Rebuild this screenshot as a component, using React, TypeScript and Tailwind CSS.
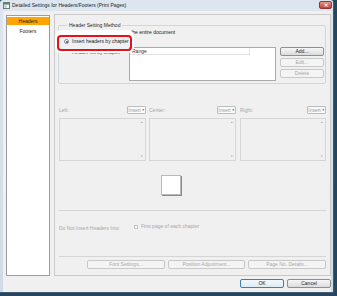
const btn =
  "flex items-center justify-center rounded-[2px] border text-[5px] leading-none";

function Btn({ label, w, disabled, primary }: { label: string; w: string; disabled?: boolean; primary?: boolean }) {
  const look = disabled
    ? "border-[#c8c8c8] bg-[#f4f4f4] text-[#a8a8a8]"
    : primary
      ? "border-[#3c7fb1] bg-gradient-to-b from-[#f2f8fc] to-[#dcebf5] text-[#1e1e1e]"
      : "border-[#8e8f8f] bg-gradient-to-b from-[#f6f6f6] to-[#dcdcdc] text-[#1e1e1e]";
  return <div className={`${btn} ${look} ${w} h-[9px]`}>{label}</div>;
}

function InsertBtn() {
  return (
    <div className="flex h-[8px] w-[19px] items-center justify-center rounded-[1px] border border-[#bdbdbd] bg-[#fafafa] text-[5px] leading-none text-[#9a9a9a]">
      Insert<span className="ml-[1px] text-[3px] text-[#555]">▼</span>
    </div>
  );
}

function PartBox({ label, w }: { label: string; w: string }) {
  return (
    <div className={`flex flex-col ${w}`}>
      <div className="flex h-[8px] items-center justify-between">
        <span className="pt-[1px] text-[#a6a6a6]">{label}</span>
        <InsertBtn />
      </div>
      <div className="mt-[4px] flex h-[43px] flex-col items-end justify-between border border-[#d6d6d6] bg-[#f0f0f0] px-[2px] py-[2px] text-[3px] leading-none text-[#8d8d8d]">
        <span>▴</span>
        <span>▾</span>
      </div>
    </div>
  );
}

export default function App() {
  return (
    <div className="h-[296px] w-[337px] overflow-hidden bg-[#22475e] font-['Liberation_Sans',sans-serif] text-[5px] leading-none text-[#222]">
      <div className="flex h-[293px] w-[334px] flex-col rounded-t-[3px] border-r border-b border-[#40596e] bg-gradient-to-b from-[#dde6ef] to-[#cfdbe6]">
        {/* title bar */}
        <div className="flex h-[11px] items-center pl-[3px] pr-[1px]">
          <svg width="7" height="7" viewBox="0 0 7 7" className="shrink-0">
            <rect x="0.5" y="0.5" width="6" height="6" fill="#f4f6f7" stroke="#6b7b86" />
            <rect x="1" y="1" width="5" height="1.6" fill="#3e9a4a" />
            <rect x="1.5" y="3.5" width="2" height="2" fill="#9fb0bc" />
          </svg>
          <span className="ml-[2px] text-[#1c1c1c]">Detailed Settings for Headers/Footers (Print Pages)</span>
          <div className="ml-auto mt-[-1px] flex h-[8px] w-[13px] items-center justify-center rounded-[2px] border border-[#8c3a33] bg-gradient-to-b from-[#e7968c] to-[#c53f30] text-[5px] font-bold text-white">
            ✕
          </div>
        </div>

        {/* body */}
        <div className="relative ml-[3px] mr-[2px] flex-1 bg-[#f0f0f0]">
          <div className="flex pt-[3px]">
            {/* left list */}
            <div className="ml-[3px] mt-[1px] h-[261px] w-[44px] border border-[#9d9d9d] bg-white">
              <div className="mt-[1px] flex h-[8px] items-center justify-center bg-[#ffa400] text-[#1e1e1e]">Headers</div>
              <div className="mt-[4px] text-center text-[#1e1e1e]">Footers</div>
            </div>

            {/* main panel */}
            <div className="ml-[4px] flex h-[262px] w-[277px] flex-col border border-[#c9c9c9] px-[4px]">
              <fieldset className="-ml-[1px] mt-[8px] h-[61px] w-[267px] rounded-[2px] border border-[#d0d7dc] pr-[1px] pl-[5px]">
                <legend className="ml-[3px] px-[2px] text-[#2a2a2a]">Header Setting Method</legend>
                <div className="mt-[2px] flex items-center">
                  <span className="h-[5px] w-[5px] rounded-full border border-[#8e8e8e] bg-white" />
                  <span className="ml-[3px] text-[#222]">Use the same headers for the entire document</span>
                </div>
                <div className="mt-[4px] flex items-center">
                  <span className="flex h-[5px] w-[5px] items-center justify-center rounded-full border border-[#7a8a98] bg-white">
                    <span className="h-[2px] w-[2px] rounded-full bg-[#2d4f73]" />
                  </span>
                  <span className="ml-[3px] text-[#222]">Insert headers by chapter</span>
                </div>
                <div className="mt-[3px] flex">
                  <span className="ml-[8px] mt-[3px] w-[57px] text-[#555]">Header list by chapter</span>
                  <div className="h-[34px] w-[147px] border border-[#a9a9a9] bg-white">
                    <div className="h-[7px] w-[120px] border-r border-b border-[#e2e2e2] pl-[2px] pt-[1px] text-[#333]">Range</div>
                  </div>
                  <div className="ml-[4px] flex flex-col gap-[2px]">
                    <Btn label="Add..." w="w-[44px]" />
                    <Btn label="Edit..." w="w-[44px]" disabled />
                    <Btn label="Delete" w="w-[44px]" disabled />
                  </div>
                </div>
              </fieldset>

              <div className="mt-[22px] flex">
                <PartBox label="Left:" w="w-[87px]" />
                <div className="w-[3px]" />
                <PartBox label="Center:" w="w-[87px]" />
                <div className="w-[4px]" />
                <PartBox label="Right:" w="w-[86px]" />
              </div>

              <div className="mt-[14px] ml-[102px] h-[20px] w-[20px] border border-[#b9b9b9] bg-white shadow-[1px_1px_0_#8a8a8a]" />

              <div className="mt-[15px] h-[1px] w-[267px] bg-[#d5d5d5]" />

              <div className="mt-[15px] flex items-center text-[#a6a6a6]">
                <span className="w-[75px]">Do Not Insert Headers Into:</span>
                <span className="-mt-[4px] h-[4px] w-[4px] border border-[#c6c6c6] bg-[#f6f6f6]" />
                <span className="-mt-[4px] ml-[3px]">First page of each chapter</span>
              </div>

              <div className="mt-[25px] h-[1px] w-[267px] bg-[#d5d5d5]" />

              <div className="mt-[3px] flex justify-end gap-[3px]">
                <Btn label="Font Settings..." w="w-[78px]" disabled />
                <Btn label="Position Adjustment..." w="w-[77px]" disabled />
                <Btn label="Page No. Details..." w="w-[78px]" disabled />
              </div>
            </div>
          </div>

          <div className="mt-[3px] flex justify-end gap-[3px]">
            <Btn label="OK" w="w-[44px]" primary />
            <Btn label="Cancel" w="w-[44px]" />
          </div>

          {/* annotation overlay */}
          <div className="absolute top-[24px] left-[54px] h-[16px] w-[75px] rounded-[4px] border-2 border-[#e4121b] shadow-[0_0_0_2px_#ffffff,0_-3px_0_2px_#ffffff]" />
        </div>
      </div>
    </div>
  );
}
